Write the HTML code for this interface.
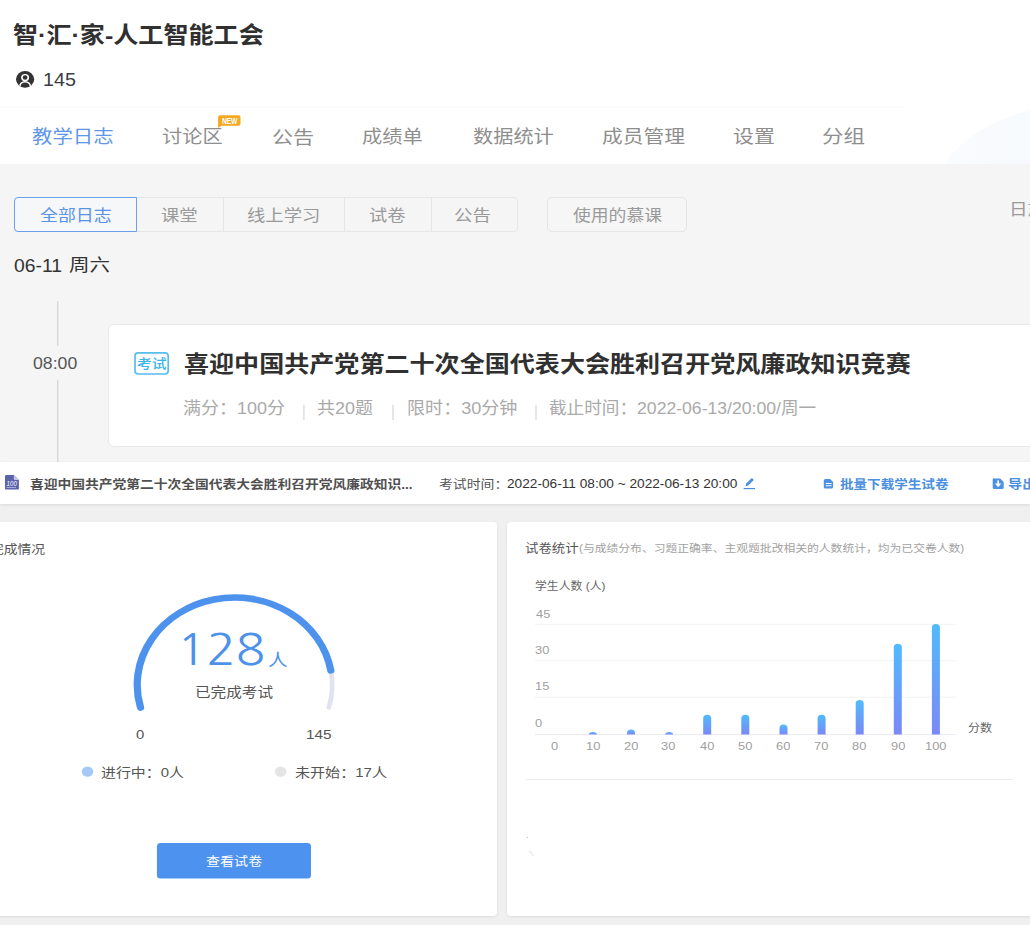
<!DOCTYPE html>
<html lang="zh-CN"><head><meta charset="utf-8"><title>智·汇·家-人工智能工会</title>
<style>
html,body{margin:0;padding:0}
html{overflow:hidden}
body{width:1030px;height:925px;position:relative;overflow:hidden;background:#fff;font-family:"Liberation Sans","Noto Sans CJK SC",sans-serif}
.t{position:absolute;white-space:nowrap;line-height:1;transform-origin:0 0}
.b{position:absolute;box-sizing:border-box}
svg{position:absolute;overflow:visible}
</style></head><body>

<!-- ===== header ===== -->
<div class="b" style="left:0;top:107px;width:904px;height:1px;background:#fbfbfb"></div>
<svg style="left:0;top:107px" width="1030" height="57" viewBox="0 107 1030 57">
<defs><linearGradient id="dg" x1="0" y1="0" x2="1" y2="0"><stop offset="0" stop-color="#fafcfe"/><stop offset="1" stop-color="#f1f6fd"/></linearGradient>
<clipPath id="nc"><rect x="0" y="107" width="1030" height="57"/></clipPath></defs>
<ellipse cx="1075" cy="215" rx="148" ry="110" fill="url(#dg)" clip-path="url(#nc)"/>
</svg>
<svg style="left:16px;top:70.7px" width="18.2" height="16.6" viewBox="0 0 17 17" preserveAspectRatio="none">
<defs><clipPath id="uc"><circle cx="8.5" cy="8.5" r="8.5"/></clipPath></defs>
<circle cx="8.5" cy="8.5" r="8.5" fill="#333"/>
<g clip-path="url(#uc)" fill="#333" stroke="#fff" stroke-width="1.5">
<ellipse cx="8.5" cy="15.6" rx="4.9" ry="4.6"/>
<circle cx="8.5" cy="6.7" r="3"/>
</g></svg>
<!-- NEW badge -->
<svg style="left:0;top:0" width="1030" height="170"><path d="M220.1 115.3h18.4a2 2 0 0 1 2 2v6.4a2 2 0 0 1-2 2h-17l-3.4 2.4v-10.8a2 2 0 0 1 2-2z" fill="#f5a821"/></svg>
<!-- ===== gray log area ===== -->
<div class="b" style="left:0;top:164px;width:1030px;height:298px;background:#f5f5f5"></div>
<div class="b" style="left:14px;top:197px;width:504px;height:35px;border:1px solid #e6e6e6;border-radius:4px"></div>
<div class="b" style="left:223px;top:198px;width:1px;height:33px;background:#e6e6e6"></div>
<div class="b" style="left:344px;top:198px;width:1px;height:33px;background:#e6e6e6"></div>
<div class="b" style="left:431px;top:198px;width:1px;height:33px;background:#e6e6e6"></div>
<div class="b" style="left:14px;top:197px;width:123px;height:35px;border:1px solid #6aa0ee;border-radius:4px 0 0 4px;background:#f6f7f8"></div>
<div class="b" style="left:547.3px;top:197px;width:140px;height:35px;border:1px solid #e5e5e5;border-radius:5px;background:#f6f6f6"></div>
<svg style="left:0;top:290px" width="120" height="172" viewBox="0 290 120 172"><path d="M57.7 301.2V346M57.7 380V462" stroke="#d6d6d6" stroke-width="1.3"/></svg>
<div class="b" style="left:108px;top:324px;width:940px;height:123px;background:#fff;border:1px solid #e9e9e9;border-radius:6px"></div>
<svg style="left:130px;top:348px" width="44" height="30" viewBox="130 348 44 30"><rect x="135" y="352.800" width="33.200" height="21.200" rx="3.200" fill="none" stroke="#58bdee" stroke-width="1.700"/></svg>
<svg style="left:0;top:400px" width="1030" height="24" viewBox="0 400 1030 24"><path d="M303.900 404.800V420M393 404.800V420M536 404.800V420" stroke="#d9d9d9" stroke-width="1.300"/></svg>
<!-- ===== bottom area ===== -->
<div class="b" style="left:0;top:462px;width:1030px;height:463px;background:#f0f0f0"></div>
<div class="b" style="left:0;top:462px;width:1030px;height:42px;background:#fff;box-shadow:0 1px 3px rgba(0,0,0,.10)"></div>
<div class="b" style="left:-6px;top:521.5px;width:502.7px;height:394px;background:#fff;border-radius:4px;box-shadow:0 1px 3px rgba(0,0,0,.08)"></div>
<div class="b" style="left:507.3px;top:521.5px;width:540px;height:394px;background:#fff;border-radius:4px;box-shadow:0 1px 3px rgba(0,0,0,.08)"></div>
<svg style="left:0;top:462px" width="1030" height="463" viewBox="0 462 1030 463">
<defs><linearGradient id="bg" x1="0" y1="0" x2="0" y2="1"><stop offset="0" stop-color="#50bbfc"/><stop offset="1" stop-color="#7b88f7"/></linearGradient></defs>
<!-- file icon -->
<path d="M6.2 475h7.6l5.1 4.9v8.5a1.2 1.2 0 0 1-1.2 1.2H6.2A1.2 1.2 0 0 1 5 488.4v-12.2a1.2 1.2 0 0 1 1.2-1.2z" fill="#5c63ad"/>
<path d="M13.8 475l5.1 4.9h-4.1a1 1 0 0 1-1-1z" fill="#c3c6e4"/>
<text x="6.6" y="486.2" font-family="Liberation Sans,sans-serif" font-size="6.8" font-style="italic" fill="#fff" textLength="10.2" lengthAdjust="spacingAndGlyphs">100</text>
<path d="M6.4 487.6h9.6" stroke="#fff" stroke-width=".6" opacity=".85"/>
<!-- pencil -->
<path d="M743.6 488.6h11.4" stroke="#4a8fe0" stroke-width="1.2"/>
<path d="M745.6 486.2l.6-2.6 5.6-5.6 2 2-5.6 5.6z" fill="#4a8fe0"/>
<!-- doc icon -->
<path d="M825.3 479h4.8l3 3v5a1.5 1.5 0 0 1-1.5 1.5h-6.3a1.5 1.5 0 0 1-1.5-1.5v-6.5a1.5 1.5 0 0 1 1.5-1.500z" fill="#4d91e4"/>
<path d="M825.8 483.5h5.8M825.800 485.800h5.800" stroke="#fff" stroke-width="1.1"/>
<!-- download icon -->
<path d="M994.2 478.500h6l3.500 3.500v5.500a1.500 1.500 0 0 1-1.500 1.500h-8a1.500 1.500 0 0 1-1.500-1.500v-8a1.500 1.500 0 0 1 1.500-1.500z" fill="#4d91e4"/>
<path d="M997.300 480.600h1.700v3h2.300l-3.150 3.600-3.150-3.600h2.300z" fill="#fff"/>
<!-- gauge -->
<g transform="scale(1.114,1)" fill="none" stroke-linecap="round">
<path d="M296.95 670.41A87.5 87.5 0 0 1 295.20 707.65" stroke="#e1e3ef" stroke-width="4.2"/>
<path d="M126.16 707.65A87.5 87.5 0 1 1 296.95 670.41" stroke="#4d92ec" stroke-width="6.5"/>
</g>
<ellipse cx="87.5" cy="771.6" rx="5.8" ry="5.2" fill="#a6c8f6"/>
<ellipse cx="280.7" cy="771.6" rx="5.8" ry="5.2" fill="#e4e4e4"/>
<rect x="156.9" y="843" width="154.1" height="35.4" rx="3.5" fill="#4d92ef"/>
<!-- chart -->
<path d="M535 624.3H955.5M535 660.7H955.5M535 697.2H955.5" stroke="#f1f2f6" stroke-width="1"/>
<path d="M535 734.600H955.500" stroke="#e9ebf2" stroke-width="1"/>
<path d="M588.9 734.4V734.4A4 2.5 0 0 1 596.9 734.4V734.4Z" fill="url(#bg)"/>
<path d="M627.0 734.4V733.1A4 3.6 0 0 1 635.0 733.1V734.4Z" fill="url(#bg)"/>
<path d="M665.1 734.4V734.4A4 2.5 0 0 1 673.1 734.4V734.4Z" fill="url(#bg)"/>
<path d="M703.2 734.4V718.4A4 3.6 0 0 1 711.2 718.4V734.4Z" fill="url(#bg)"/>
<path d="M741.3 734.4V718.4A4 3.6 0 0 1 749.3 718.4V734.4Z" fill="url(#bg)"/>
<path d="M779.5 734.4V728.2A4 3.6 0 0 1 787.5 728.2V734.4Z" fill="url(#bg)"/>
<path d="M817.6 734.4V718.4A4 3.6 0 0 1 825.6 718.4V734.4Z" fill="url(#bg)"/>
<path d="M855.7 734.4V703.7A4 3.6 0 0 1 863.7 703.7V734.4Z" fill="url(#bg)"/>
<path d="M893.8 734.4V647.3A4 3.6 0 0 1 901.8 647.3V734.4Z" fill="url(#bg)"/>
<path d="M931.9 734.4V627.7A4 3.6 0 0 1 939.9 627.7V734.4Z" fill="url(#bg)"/>
<path d="M526 779.600H1013" stroke="#ebebeb" stroke-width="1"/>
<circle cx="527.200" cy="837.300" r=".600" fill="#aaa"/><path d="M529.500 851.200l3.800 4.200" stroke="#ececec" stroke-width="1.400" stroke-linecap="round"/>
</svg>

<div class="t" style="left:13.31px;top:24.37px;font-size:22.97px;transform:scaleX(1.0919);color:#303030;font-weight:700;">智·汇·家-人工智能工会</div>
<div class="t" style="left:42.55px;top:71.03px;font-size:18.14px;transform:scaleX(1.0881);color:#3a3d42;">145</div>
<div class="t" style="left:32.07px;top:128.79px;font-size:17.80px;transform:scaleX(1.1489);color:#6096e8;">教学日志</div>
<div class="t" style="left:162.27px;top:129.44px;font-size:17.80px;transform:scaleX(1.1384);color:#8e8e8e;">讨论区</div>
<div class="t" style="left:271.77px;top:129.64px;font-size:17.80px;transform:scaleX(1.1879);color:#8e8e8e;">公告</div>
<div class="t" style="left:361.93px;top:128.79px;font-size:17.80px;transform:scaleX(1.1364);color:#8e8e8e;">成绩单</div>
<div class="t" style="left:473.09px;top:128.79px;font-size:17.80px;transform:scaleX(1.1360);color:#8e8e8e;">数据统计</div>
<div class="t" style="left:601.72px;top:128.79px;font-size:17.80px;transform:scaleX(1.1656);color:#8e8e8e;">成员管理</div>
<div class="t" style="left:733.25px;top:129.14px;font-size:17.80px;transform:scaleX(1.1768);color:#8e8e8e;">设置</div>
<div class="t" style="left:822.15px;top:129.29px;font-size:17.80px;transform:scaleX(1.2087);color:#8e8e8e;">分组</div>
<div class="t" style="left:222.20px;top:115.52px;font-size:9.51px;transform:scaleX(0.7149);color:#fff;font-weight:700;letter-spacing:-0.3px;">NEW</div>
<div class="t" style="left:40.30px;top:208.13px;font-size:16.00px;transform:scaleX(1.1202);color:#5a94e6;">全部日志</div>
<div class="t" style="left:160.68px;top:208.00px;font-size:16.00px;transform:scaleX(1.1482);color:#9a9a9a;">课堂</div>
<div class="t" style="left:247.18px;top:208.00px;font-size:16.00px;transform:scaleX(1.1446);color:#9a9a9a;">线上学习</div>
<div class="t" style="left:368.94px;top:208.00px;font-size:16.00px;transform:scaleX(1.1380);color:#9a9a9a;">试卷</div>
<div class="t" style="left:454.41px;top:207.87px;font-size:16.00px;transform:scaleX(1.1582);color:#9a9a9a;">公告</div>
<div class="t" style="left:572.96px;top:208.00px;font-size:16.00px;transform:scaleX(1.1125);color:#9a9a9a;">使用的慕课</div>
<div class="t" style="left:1009.03px;top:202.03px;font-size:15.50px;transform:scaleX(1.1982);color:#9a9a9a;">日志</div>
<div class="t" style="left:14.41px;top:257.66px;font-size:17.58px;transform:scaleX(1.0973);color:#333;">06-11</div>
<div class="t" style="left:69.37px;top:256.72px;font-size:17.50px;transform:scaleX(1.1717);color:#333;">周六</div>
<div class="t" style="left:33.01px;top:356.17px;font-size:16.74px;transform:scaleX(1.0559);color:#555;">08:00</div>
<div class="t" style="left:137.26px;top:358.38px;font-size:12.95px;transform:scaleX(1.1444);color:#3db3ec;font-weight:500;">考试</div>
<div class="t" style="left:183.66px;top:353.84px;font-size:22.34px;transform:scaleX(1.1223);color:#303030;font-weight:700;">喜迎中国共产党第二十次全国代表大会胜利召开党风廉政知识竞赛</div>
<div class="t" style="left:183.01px;top:400.45px;font-size:17.00px;transform:scaleX(1.0589);color:#aaaaaa;">满分：100分</div>
<div class="t" style="left:317.40px;top:399.95px;font-size:17.00px;transform:scaleX(1.0569);color:#aaaaaa;">共20题</div>
<div class="t" style="left:406.66px;top:400.45px;font-size:17.00px;transform:scaleX(1.0628);color:#aaaaaa;">限时：30分钟</div>
<div class="t" style="left:549.32px;top:400.45px;font-size:17.00px;transform:scaleX(1.0358);color:#aaaaaa;">截止时间：2022-06-13/20:00/周一</div>
<div class="t" style="left:30.19px;top:479.06px;font-size:12.30px;transform:scaleX(1.1181);color:#505050;font-weight:700;">喜迎中国共产党第二十次全国代表大会胜利召开党风廉政知识...</div>
<div class="t" style="left:438.96px;top:478.87px;font-size:12.30px;transform:scaleX(1.1276);color:#555;">考试时间：</div>
<div class="t" style="left:506.82px;top:478.25px;font-size:12.30px;transform:scaleX(1.1114);color:#333;">2022-06-11 08:00 ~ 2022-06-13 20:00</div>
<div class="t" style="left:840.05px;top:479.26px;font-size:12.30px;transform:scaleX(1.1024);color:#4a8fe0;font-weight:700;">批量下载学生试卷</div>
<div class="t" style="left:1008.04px;top:479.26px;font-size:12.30px;transform:scaleX(1.1542);color:#4a8fe0;font-weight:700;">导出</div>
<div class="t" style="left:-9.84px;top:543.66px;font-size:12.30px;transform:scaleX(1.1188);color:#555;">完成情况</div>
<div class="t" style="left:176.85px;top:628.34px;font-size:43.57px;transform:scaleX(1.1133);color:#4d92ea;font-family:'NanumGothic','Liberation Sans',sans-serif;">128</div>
<div class="t" style="left:268.37px;top:653.48px;font-size:16.80px;transform:scaleX(1.1706);color:#4d92ea;">人</div>
<div class="t" style="left:194.52px;top:684.70px;font-size:14.00px;transform:scaleX(1.1156);color:#555;">已完成考试</div>
<div class="t" style="left:136.00px;top:728.01px;font-size:13.60px;transform:scaleX(1.0953);color:#555;">0</div>
<div class="t" style="left:305.82px;top:727.90px;font-size:13.60px;transform:scaleX(1.1290);color:#555;">145</div>
<div class="t" style="left:101.40px;top:765.85px;font-size:13.00px;transform:scaleX(1.1468);color:#555;">进行中：0人</div>
<div class="t" style="left:295.45px;top:765.85px;font-size:13.00px;transform:scaleX(1.1584);color:#555;">未开始：17人</div>
<div class="t" style="left:205.81px;top:856.06px;font-size:12.30px;transform:scaleX(1.1421);color:#fff;">查看试卷</div>
<div class="t" style="left:524.88px;top:543.47px;font-size:12.30px;transform:scaleX(1.0898);color:#555;">试卷统计</div>
<div class="t" style="left:578.76px;top:544.42px;font-size:10.00px;transform:scaleX(1.1794);color:#a2a2a2;">(与成绩分布、习题正确率、主观题批改相关的人数统计，均为已交卷人数)</div>
<div class="t" style="left:534.61px;top:580.71px;font-size:10.80px;transform:scaleX(1.0984);color:#666;">学生人数 (人)</div>
<div class="t" style="left:535.59px;top:608.70px;font-size:11.80px;transform:scaleX(1.0900);color:#a0a0a0;">45</div>
<div class="t" style="left:534.87px;top:645.20px;font-size:11.80px;transform:scaleX(1.0900);color:#a0a0a0;">30</div>
<div class="t" style="left:535.23px;top:681.30px;font-size:11.80px;transform:scaleX(1.0900);color:#a0a0a0;">15</div>
<div class="t" style="left:535.47px;top:718.20px;font-size:11.80px;transform:scaleX(1.0900);color:#a0a0a0;">0</div>
<div class="t" style="left:550.77px;top:741.20px;font-size:11.80px;transform:scaleX(1.0900);color:#a0a0a0;">0</div>
<div class="t" style="left:585.67px;top:741.20px;font-size:11.80px;transform:scaleX(1.0900);color:#a0a0a0;">10</div>
<div class="t" style="left:623.54px;top:741.20px;font-size:11.80px;transform:scaleX(1.0900);color:#a0a0a0;">20</div>
<div class="t" style="left:661.19px;top:741.20px;font-size:11.80px;transform:scaleX(1.0900);color:#a0a0a0;">30</div>
<div class="t" style="left:700.35px;top:741.20px;font-size:11.80px;transform:scaleX(1.0900);color:#a0a0a0;">40</div>
<div class="t" style="left:737.86px;top:741.20px;font-size:11.80px;transform:scaleX(1.0900);color:#a0a0a0;">50</div>
<div class="t" style="left:776.30px;top:741.20px;font-size:11.80px;transform:scaleX(1.0900);color:#a0a0a0;">60</div>
<div class="t" style="left:813.74px;top:741.20px;font-size:11.80px;transform:scaleX(1.0900);color:#a0a0a0;">70</div>
<div class="t" style="left:852.18px;top:741.20px;font-size:11.80px;transform:scaleX(1.0900);color:#a0a0a0;">80</div>
<div class="t" style="left:890.62px;top:741.20px;font-size:11.80px;transform:scaleX(1.0900);color:#a0a0a0;">90</div>
<div class="t" style="left:924.73px;top:741.20px;font-size:11.80px;transform:scaleX(1.0900);color:#a0a0a0;">100</div>
<div class="t" style="left:968.29px;top:723.44px;font-size:10.80px;transform:scaleX(1.1208);color:#666;">分数</div>
</body></html>
